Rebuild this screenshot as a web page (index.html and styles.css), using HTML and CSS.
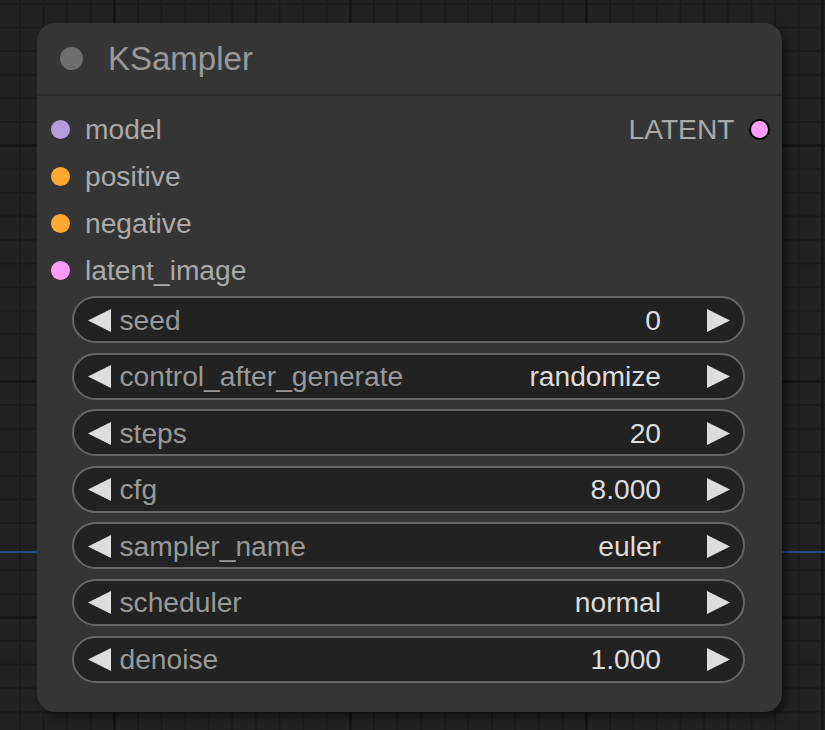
FILE: index.html
```html
<!DOCTYPE html>
<html>
<head>
<meta charset="utf-8">
<title>KSampler</title>
<link rel="stylesheet" href="styles.css">
</head>
<body>
<div class="canvas">
  <div class="link"></div>
  <div class="node">
    <div class="node-title">
      <span class="title-dot"></span>
      <span class="title-text">KSampler</span>
    </div>
    <div class="slots">
      <div class="slot-row">
        <div class="slot in"><span class="dot model"></span><span class="slot-label">model</span></div>
        <div class="slot out"><span class="slot-label">LATENT</span><span class="dot latent out-dot"></span></div>
      </div>
      <div class="slot-row">
        <div class="slot in"><span class="dot cond"></span><span class="slot-label">positive</span></div>
      </div>
      <div class="slot-row">
        <div class="slot in"><span class="dot cond"></span><span class="slot-label">negative</span></div>
      </div>
      <div class="slot-row">
        <div class="slot in"><span class="dot latent"></span><span class="slot-label">latent_image</span></div>
      </div>
    </div>
    <div class="widgets">
      <div class="widget">
        <svg class="arrow" viewBox="0 0 23 23"><polygon points="23,0 23,23 0,11.5"/></svg>
        <span class="w-label">seed</span><span class="w-value">0</span>
        <svg class="arrow right" viewBox="0 0 23 23"><polygon points="0,0 0,23 23,11.5"/></svg>
      </div>
      <div class="widget">
        <svg class="arrow" viewBox="0 0 23 23"><polygon points="23,0 23,23 0,11.5"/></svg>
        <span class="w-label">control_after_generate</span><span class="w-value">randomize</span>
        <svg class="arrow right" viewBox="0 0 23 23"><polygon points="0,0 0,23 23,11.5"/></svg>
      </div>
      <div class="widget">
        <svg class="arrow" viewBox="0 0 23 23"><polygon points="23,0 23,23 0,11.5"/></svg>
        <span class="w-label">steps</span><span class="w-value">20</span>
        <svg class="arrow right" viewBox="0 0 23 23"><polygon points="0,0 0,23 23,11.5"/></svg>
      </div>
      <div class="widget">
        <svg class="arrow" viewBox="0 0 23 23"><polygon points="23,0 23,23 0,11.5"/></svg>
        <span class="w-label">cfg</span><span class="w-value">8.000</span>
        <svg class="arrow right" viewBox="0 0 23 23"><polygon points="0,0 0,23 23,11.5"/></svg>
      </div>
      <div class="widget">
        <svg class="arrow" viewBox="0 0 23 23"><polygon points="23,0 23,23 0,11.5"/></svg>
        <span class="w-label">sampler_name</span><span class="w-value">euler</span>
        <svg class="arrow right" viewBox="0 0 23 23"><polygon points="0,0 0,23 23,11.5"/></svg>
      </div>
      <div class="widget">
        <svg class="arrow" viewBox="0 0 23 23"><polygon points="23,0 23,23 0,11.5"/></svg>
        <span class="w-label">scheduler</span><span class="w-value">normal</span>
        <svg class="arrow right" viewBox="0 0 23 23"><polygon points="0,0 0,23 23,11.5"/></svg>
      </div>
      <div class="widget">
        <svg class="arrow" viewBox="0 0 23 23"><polygon points="23,0 23,23 0,11.5"/></svg>
        <span class="w-label">denoise</span><span class="w-value">1.000</span>
        <svg class="arrow right" viewBox="0 0 23 23"><polygon points="0,0 0,23 23,11.5"/></svg>
      </div>
    </div>
  </div>
</div>
</body>
</html>
```
FILE: styles.css
```css
html, body {
  margin: 0;
  padding: 0;
  width: 825px;
  height: 730px;
  overflow: hidden;
}

body {
  font-family: "Liberation Sans", Arial, sans-serif;
  background-color: #222222;
}

.canvas {
  position: relative;
  width: 825px;
  height: 730px;
  padding-top: 23px;
  box-sizing: border-box;
  background-color: #222222;
  background-image:
    linear-gradient(90deg, #161616 3px, transparent 3px),
    linear-gradient(#161616 3px, transparent 3px),
    linear-gradient(90deg, #1b1b1b 2px, transparent 2px),
    linear-gradient(#1b1b1b 2px, transparent 2px);
  background-size: 236px 236px, 236px 236px, 23.6px 23.6px, 23.6px 23.6px;
  background-position: 113px 144px, 113px 144px, 19px 3px, 19px 3px;
}

.link {
  position: absolute;
  left: 0;
  top: 551px;
  width: 825px;
  height: 2px;
  background: #2b4a86;
}

.node {
  position: relative;
  z-index: 1;
  margin-left: 37px;
  width: 745px;
  height: 689px;
  background: #353535;
  border-radius: 18px;
  box-shadow: 5px 5px 9px rgba(0, 0, 0, 0.45);
}

.node-title {
  height: 71px;
  border-bottom: 2px solid #2b2b2b;
  display: flex;
  align-items: center;
  padding-left: 23px;
}

.title-dot {
  width: 23px;
  height: 23px;
  border-radius: 50%;
  background: #6e6e6e;
  flex: none;
}

.title-text {
  margin-left: 25px;
  font-size: 33px;
  color: #999999;
}

.slots {
  padding-top: 10px;
}

.slot-row {
  height: 47px;
  display: flex;
  align-items: center;
  justify-content: space-between;
}

.slot {
  display: flex;
  align-items: center;
  font-size: 28.2px;
  color: #aaaaaa;
}

.slot.in {
  padding-left: 13.5px;
}

.slot.in .slot-label {
  margin-left: 15.5px;
}

.slot.out {
  padding-right: 12.5px;
}

.slot.out .slot-label {
  margin-right: 14px;
}

.dot {
  width: 19px;
  height: 19px;
  border-radius: 50%;
  flex: none;
}

.dot.model { background: #b39ddb; }
.dot.cond { background: #ffa931; }
.dot.latent { background: #ff9cf9; }

.dot.out-dot {
  width: 17px;
  height: 17px;
  border: 2px solid #000000;
}

.widgets {
  display: flex;
  flex-direction: column;
  gap: 9.6px;
  padding-top: 2px;
  padding-left: 35px;
}

.widget {
  width: 673px;
  height: 47px;
  box-sizing: border-box;
  border: 2px solid #666666;
  border-radius: 24px;
  background: #222222;
  display: flex;
  align-items: center;
  padding: 1px 13px 0 13.5px;
  font-size: 28.2px;
}

.arrow {
  width: 23px;
  height: 23px;
  flex: none;
  fill: #dddddd;
}

.w-label {
  margin-left: 9px;
  color: #999999;
}

.w-value {
  margin-left: auto;
  color: #dddddd;
}

.arrow.right {
  margin-left: 46px;
}
```
